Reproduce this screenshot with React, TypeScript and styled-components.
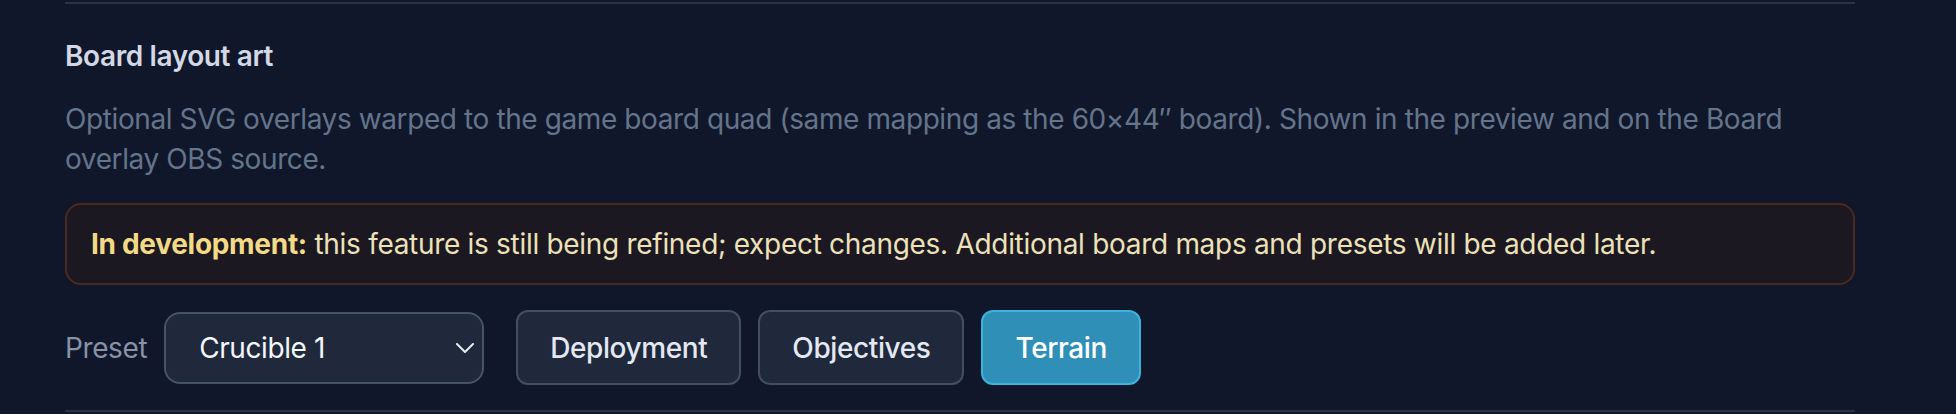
import styled, { createGlobalStyle } from "styled-components";

const GlobalStyle = createGlobalStyle`
  html, body {
    margin: 0;
    padding: 0;
    background-color: #10172a;
  }
  body {
    font-family: Inter, "Noto Sans", "Liberation Sans", sans-serif;
    letter-spacing: -0.4px;
    -webkit-font-smoothing: antialiased;
  }
`;

const Page = styled.div`
  width: 1956px;
  height: 414px;
  padding-top: 2px;
  box-sizing: border-box;
  overflow: hidden;
  background-color: #10172a;
`;

const Section = styled.section`
  width: 1790px;
  margin-left: 65px;
  border-top: 2px solid #273346;
  border-bottom: 2px solid #273346;
  padding: 32px 0 25px;
  display: flex;
  flex-direction: column;
  gap: 24px;
`;

const Header = styled.div`
  display: flex;
  flex-direction: column;
  gap: 23px;
`;

const Title = styled.h3`
  margin: 0;
  font-size: 28px;
  line-height: 40px;
  font-weight: 600;
  color: #d3d9e4;
`;

const Description = styled.p`
  margin: 0;
  font-size: 28px;
  line-height: 40px;
  color: #64748b;
`;

const Notice = styled.div`
  border: 2px solid #4a2a1c;
  background-color: #1b1821;
  border-radius: 16px;
  padding: 19px 24px 19px;
  font-size: 28px;
  line-height: 40px;
  letter-spacing: -0.3px;
  color: #ece1b9;
`;

const NoticeLabel = styled.strong`
  font-weight: 700;
  color: #f2da86;
`;

const Controls = styled.div`
  display: flex;
  align-items: center;
  gap: 17px;
  margin-top: 1px;
`;

const Label = styled.label`
  font-size: 28px;
  line-height: 40px;
  color: #8792a6;
`;

const SelectWrap = styled.div`
  position: relative;
  width: 320px;
  margin-right: 15px;
`;

const Select = styled.select`
  appearance: none;
  -webkit-appearance: none;
  width: 100%;
  height: 72px;
  box-sizing: border-box;
  padding: 0 48px 0 33px;
  border: 2px solid #465469;
  border-radius: 16px;
  background-color: #1f293b;
  color: #f4f6fa;
  font-family: inherit;
  font-size: 28px;
  letter-spacing: inherit;
  outline: none;
`;

const Chevron = styled.svg`
  position: absolute;
  right: 10px;
  top: 50%;
  transform: translateY(-50%);
  pointer-events: none;
`;

const ToggleButton = styled.button<{ $active?: boolean }>`
  height: 75px;
  box-sizing: border-box;
  padding: 0 32px;
  border-radius: 12px;
  border: 2px solid ${(p) => (p.$active ? "#3cb3dc" : "#414e63")};
  background-color: ${(p) => (p.$active ? "#2f8fb6" : "#1f293b")};
  color: ${(p) => (p.$active ? "#ffffff" : "#e3e8f2")};
  font-family: inherit;
  font-size: 28px;
  font-weight: 500;
  letter-spacing: inherit;
  cursor: pointer;
`;

const layers = ["Deployment", "Objectives", "Terrain"];

export default function App() {
  const active = "Terrain";
  return (
    <Page>
      <GlobalStyle />
      <Section>
        <Header>
          <Title>Board layout art</Title>
          <Description>
            Optional SVG overlays warped to the game board quad (same mapping as the 60×44″ board). Shown in the
            preview and on the Board overlay OBS source.
          </Description>
        </Header>
        <Notice>
          <NoticeLabel>In development:</NoticeLabel> this feature is still being refined; expect changes. Additional
          board maps and presets will be added later.
        </Notice>
        <Controls>
          <Label htmlFor="preset">Preset</Label>
          <SelectWrap>
            <Select id="preset" defaultValue="crucible-1">
              <option value="crucible-1">Crucible 1</option>
            </Select>
            <Chevron width="18" height="10" viewBox="0 0 18 10" fill="none">
              <path d="M1 1l8 8 8-8" stroke="#e6eaf1" strokeWidth="2" strokeLinecap="round" strokeLinejoin="round" />
            </Chevron>
          </SelectWrap>
          {layers.map((name) => (
            <ToggleButton key={name} $active={name === active}>
              {name}
            </ToggleButton>
          ))}
        </Controls>
      </Section>
    </Page>
  );
}
